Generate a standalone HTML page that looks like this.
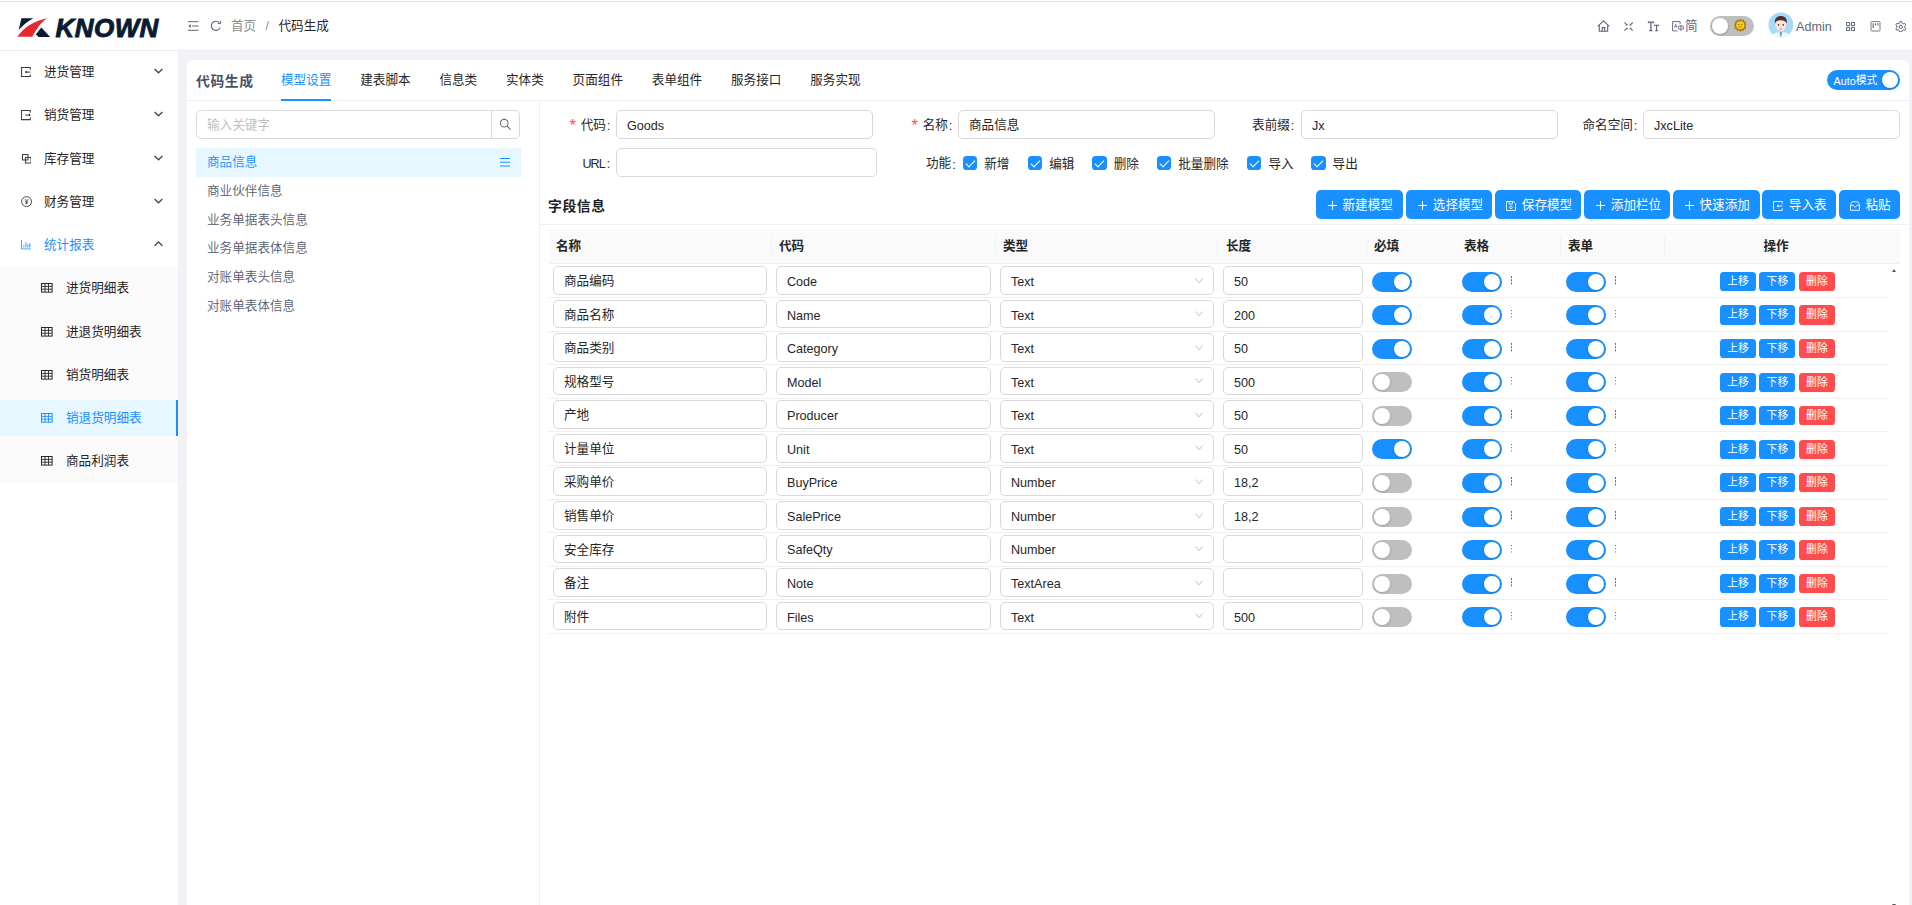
<!DOCTYPE html>
<html lang="zh-CN">
<head>
<meta charset="utf-8">
<title>代码生成</title>
<style>
*{box-sizing:border-box;margin:0;padding:0}
html,body{width:1912px;height:905px;overflow:hidden}
body{position:relative;background:#f0f2f5;font-family:"Liberation Sans","Noto Sans CJK SC",sans-serif;font-size:12.6px;color:#262626;line-height:1}
.abs{position:absolute}
.en{position:relative;top:1.6px}
svg{display:block}
/* header */
#hd{position:absolute;left:0;top:0;width:1912px;height:50px;background:#fff}
#hdline{position:absolute;left:0;top:50px;width:1912px;height:1px;background:#ecedef}
#topline{position:absolute;left:0;top:1px;width:1912px;height:1px;background:#dfdfdf}
#logo-txt{position:absolute;left:55.5px;top:13px;font-size:26px;font-weight:bold;font-style:italic;color:#0b1b33;letter-spacing:.45px;line-height:30px;-webkit-text-stroke:.9px #0b1b33}
.crumb{position:absolute;top:17px;line-height:18px;font-size:12.6px}
/* sidebar */
#sb{position:absolute;left:0;top:50px;width:178px;height:855px;background:#fff}
.mi{position:absolute;left:0;width:178px;height:36px;line-height:36px}
.mi .t{position:absolute;left:44px;top:0;font-size:12.6px;color:#262626}
.mi svg{position:absolute}
#sub{position:absolute;left:0;top:216.5px;width:178px;height:216px;background:#fafafa}
.si .t{left:66px}
.sel{background:#e6f7ff}
.sel:after{content:"";position:absolute;right:0;top:0;width:1.600px;height:36px;background:#1890ff}
.sel .t{color:#1890ff}
/* card */
#card{position:absolute;left:187px;top:60px;width:1722px;height:860px;background:#fff;border-radius:5px 5px 0 0}
.tab{position:absolute;top:71px;line-height:18px;font-size:12.6px;color:#262626}

.tabt{position:absolute;left:9px;top:10.5px;font-size:13.8px;letter-spacing:.6px;font-weight:bold;line-height:22px;color:#4a5164}
.tab{position:absolute;top:11px;line-height:18px;font-size:12.6px;color:#262626;white-space:nowrap}
.tab.on{color:#1890ff}
#tabline{position:absolute;left:0;top:40px;width:1722px;height:1px;background:#f0f0f0}
#ink{position:absolute;left:94px;top:39px;width:50px;height:2px;background:#1890ff}
#auto{position:absolute;left:1640px;top:10px;width:73px;height:20px;border-radius:10px;background:#1890ff;color:#fff;font-size:10.8px;line-height:20.8px;padding-left:6.5px}
#auto i{position:absolute;right:2px;top:2px;width:16px;height:16px;border-radius:8px;background:#fff;box-shadow:0 1px 3px rgba(0,35,11,.2)}
#vline{position:absolute;left:352px;top:41px;width:1px;height:820px;background:#f0f0f0}
#srch{position:absolute;left:9px;top:50px;width:324px;height:29px;border:1px solid #d9d9d9;border-radius:5px;background:#fff}
#srch .ph{position:absolute;left:10px;top:5px;line-height:18px;color:#bfbfbf}
#srch .btn{position:absolute;right:0;top:0;width:28px;height:27px;border-left:1px solid #d9d9d9}
.li{position:absolute;left:9px;width:325px;height:28.8px;line-height:29.6px;padding-left:11px;color:#565d70;font-weight:350}
.li.on{background:#e6f7ff;color:#1890ff}
.lab{position:absolute;line-height:18px;white-space:nowrap;color:#262626}
.lab b{color:#ff4d4f;font-weight:normal;font-family:"Liberation Sans",sans-serif;font-size:16.500px;line-height:0;position:relative;top:2.600px;left:-1px;margin-right:3.800px}
.lab u{text-decoration:none;position:relative;top:1.6px;margin-left:1px;margin-right:-.5px}
.inp{position:absolute;height:28.8px;border:1px solid #d9d9d9;border-radius:5px;background:#fff;line-height:29.4px;padding-left:10px;color:#262626;white-space:nowrap}
.cb{position:absolute;top:96px;width:14.4px;height:14.4px;border-radius:3.6px;background:#1890ff}
.cb:after{content:"";position:absolute;left:5px;top:1.800px;width:4px;height:7.800px;border:solid #fff;border-width:0 1.400px 1.400px 0;transform:rotate(45deg)}
.cbl{position:absolute;top:94.5px;line-height:18px;white-space:nowrap}
#sect{position:absolute;left:361px;top:136.200px;font-size:13.8px;letter-spacing:.6px;font-weight:bold;line-height:22px;color:#1f1f1f}
.bt{position:absolute;top:130px;height:29px;border-radius:5px;background:#1890ff;color:#fff;line-height:31.6px;white-space:nowrap;box-shadow:0 2px 0 rgba(0,0,0,.045)}
.bt span{position:absolute;top:0}
.bt svg{position:absolute}
#sline{position:absolute;left:353px;top:164px;width:1369px;height:1px;background:#f0f0f0}
#th{position:absolute;left:362px;top:169px;width:1351px;height:35px;background:#fafafa;border-bottom:1px solid #f0f0f0}
#th b{position:absolute;margin-left:-1px;top:8px;line-height:18px;font-weight:bold;color:#262626}
#th i{position:absolute;margin-left:-1px;top:8px;width:1px;height:18px;background:#f0f0f0}
.row{position:absolute;left:361px;width:1340px;height:34px}
.row:after{content:"";position:absolute;left:0;top:33.56px;width:1340px;height:1px;background:#f0f0f0}
.row .inp{top:2.5px;height:28.7px;line-height:29.2px}
.inp .en{top:.9px}
.sw{position:absolute;top:8px;width:40px;height:20px;border-radius:10px;background:#1890ff}
.sw:after{content:"";position:absolute;right:2px;top:2px;width:16px;height:16px;border-radius:8px;background:#fff;box-shadow:0 1px 3px rgba(0,35,11,.2)}
.sw.off{background:#bfbfbf}
.sw.off:after{right:auto;left:2px}
.dots{position:absolute;top:12.5px;width:2px;height:9px}
.dots:before{content:"";position:absolute;left:0;top:0;width:1.6px;height:1.6px;background:#6a6a6a;box-shadow:0 3.2px 0 #6a6a6a,0 6.4px 0 #6a6a6a}
.sb{position:absolute;top:8.3px;width:36px;height:19.2px;border-radius:3.6px;background:#1890ff;color:#fff;font-size:10.8px;line-height:19.800px;text-align:center;box-shadow:0 1.500px 0 rgba(0,0,0,.04)}
.sb.r{background:#ff4d4f}
.arrow{position:absolute;width:0;height:0;border-left:2.6px solid transparent;border-right:2.6px solid transparent}
</style>
</head>
<body>
<div id="hd"></div>

<!-- logo -->
<svg class="abs" style="left:16px;top:16px" width="36" height="23" viewBox="16 16 36 23">
<path d="M21.4 18.2 L33.4 18.2 C27.5 21.2 22.8 25.4 18.7 30 Z" fill="#0b1b33"/>
<path d="M17.3 36.7 C24 27.5 33.5 21 47 18.2 C41 22.5 36.6 28.5 32.3 36.7 Z" fill="#e8282f"/>
<path d="M41.3 27.5 L50.2 37 L38.6 37 L35.8 34.6 Z" fill="#0b1b33"/>
</svg>
<div id="logo-txt">KNOWN</div>
<!-- fold / reload -->
<svg class="abs" style="left:188px;top:21px" width="11" height="10" viewBox="0 0 11 10" fill="none" stroke="#5d6577" stroke-width="1"><path d="M0 .7H10.5M4.2 5H10.5M0 9.3H10.5"/><path d="M2.8 3.1L.4 5l2.4 1.9z" fill="#5d6577" stroke="none"/></svg>
<svg class="abs" style="left:209.5px;top:19.5px" width="12" height="12" viewBox="0 0 12 12" fill="none" stroke="#5d6577" stroke-width="1.1"><path d="M10.2 7.6A4.6 4.6 0 1 1 9.3 2.6"/><path d="M10.6 .9V3.6H7.9" stroke-width="1"/></svg>
<div class="crumb" style="left:231px;color:#8c8c8c">首页</div>
<div class="crumb" style="left:265.5px;color:#8c8c8c">/</div>
<div class="crumb" style="left:278.5px;color:#262626">代码生成</div>
<!-- right icons -->
<svg class="abs" style="left:1597px;top:19.8px" width="13" height="12" viewBox="0 0 13 12" fill="none" stroke="#5d6577" stroke-width="1.1" stroke-linejoin="round"><path d="M.7 6.3L6.5 .8L12.3 6.3"/><path d="M2.3 5.2V11.2H10.7V5.2"/><path d="M5.2 11.2V7.6H7.8V11.2"/></svg>
<svg class="abs" style="left:1623.6px;top:21.7px" width="9.2" height="9.2" viewBox="0 0 10 10" fill="none" stroke="#5d6577" stroke-width="1.1"><path d="M.5 .5L3.3 3.3M9.5 .5L6.7 3.3M.5 9.5L3.3 6.7M9.5 9.5L6.7 6.7"/><path d="M3.8 1.6V3.8H1.6zM6.2 1.6V3.8H8.4zM3.8 8.4V6.2H1.6zM6.2 8.4V6.2H8.4z" fill="#5d6577" stroke="none"/></svg>
<svg class="abs" style="left:1647px;top:21px" width="13" height="11" viewBox="0 0 13 11" fill="none" stroke="#5d6577" stroke-width="1.2"><path d="M1 1.100H6.800M3.900 1.100V9.600M2.400 9.600H5.400" stroke-width="1.300"/><path d="M1.300 .6V2.400M6.500 .6V2.400" stroke-width=".8"/><path d="M7.100 4.300H12M9.550 4.300V9.600M8.300 9.600H10.800" stroke-width="1.100"/><path d="M7.400 3.900V5.400M11.700 3.900V5.400" stroke-width=".7"/></svg>
<svg class="abs" style="left:1672.4px;top:20.6px" width="12" height="11" viewBox="0 0 13 12" fill="none" stroke="#5d6577" stroke-width="1"><path d="M8.8 3.6V.6H.6V10.8H6.2"/><path d="M2.6 7.2L4 3.2L5.4 7.2M3 6H5" stroke-width=".8"/><path d="M7 5.6H12.4V8.8H7zM9.7 4.4V11" stroke-width=".9"/></svg>
<div class="abs" style="left:1685px;top:17px;line-height:18px;font-size:12.6px;color:#5d6577">简</div>
<!-- theme switch -->
<div class="abs" style="left:1710px;top:16px;width:44px;height:20px;border-radius:10px;background:#bfbfbf"></div>
<div class="abs" style="left:1712px;top:18px;width:16px;height:16px;border-radius:8px;background:#fff;box-shadow:0 1px 3px rgba(0,35,11,.25)"></div>
<svg class="abs" style="left:1733.6px;top:19.4px" width="12.6" height="12.6" viewBox="0 0 12.6 12.6"><polygon points="6.30,0.00 7.57,1.57 9.45,0.84 9.76,2.84 11.76,3.15 11.03,5.03 12.60,6.30 11.03,7.57 11.76,9.45 9.76,9.76 9.45,11.76 7.57,11.03 6.30,12.60 5.03,11.03 3.15,11.76 2.84,9.76 0.84,9.45 1.57,7.57 0.00,6.30 1.57,5.03 0.84,3.15 2.84,2.84 3.15,0.84 5.03,1.57" fill="#a87512" stroke="#a87512" stroke-width=".6" stroke-linejoin="round"/><circle cx="6.300" cy="6.300" r="4.100" fill="#f7cb1c"/><circle cx="4.900" cy="5.600" r=".6" fill="#6b4a08"/><circle cx="7.700" cy="5.600" r=".6" fill="#6b4a08"/><path d="M4.800 7.600Q6.300 8.800 7.800 7.600" stroke="#6b4a08" stroke-width=".6" fill="none"/></svg>
<!-- avatar -->
<svg class="abs" style="left:1767.500px;top:12.400px" width="25.800" height="25.800" viewBox="0 0 26 26"><defs><clipPath id="avc"><circle cx="13" cy="13" r="12.6"/></clipPath></defs><circle cx="13" cy="13" r="12.6" fill="#a5dbf8"/><g clip-path="url(#avc)"><path d="M3 26C4 21.5 8 20.5 13 20.5S22 21.5 23 26Z" fill="#f4f8fb"/><path d="M11.5 20.5L13 26L14.5 20.5Z" fill="#4aa3e6"/><ellipse cx="13" cy="12.6" rx="5.6" ry="6.6" fill="#fbe3d6"/><path d="M7 11.5C6.3 5.5 10 4 13 4S19.700 5.500 19 11.500C18 9 16 8.200 13 8.200S8 9 7 11.500Z" fill="#4a3030"/><circle cx="10.6" cy="13" r=".8" fill="#3a2a2a"/><circle cx="15.4" cy="13" r=".8" fill="#3a2a2a"/><path d="M12 17Q13 17.800 14 17" stroke="#e26a6a" stroke-width=".9" fill="none"/></g></svg>
<div class="abs" style="left:1796px;top:17px;line-height:18px;font-size:12.6px;color:#5d6577"><span class="en" style="top:.8px">Admin</span></div>
<svg class="abs" style="left:1846px;top:22px" width="9" height="9" viewBox="0 0 9 9" fill="none" stroke="#5d6577" stroke-width="1"><path d="M.5 .5H3.600V3.600H.5ZM5.400 .5H8.500V3.600H5.400ZM.5 5.400H3.600V8.500H.5ZM5.400 5.400H8.500V8.500H5.400Z"/></svg>
<svg class="abs" style="left:1870px;top:21px" width="11" height="11" viewBox="0 0 11 11" fill="none" stroke="#5d6577" stroke-width="1"><rect x="1" y=".6" width="9" height="9.400" rx=".8" stroke-opacity=".85"/><path d="M3.200 2.200V7M5.600 2.200V4.600M8 2.200V4.600" stroke-width="1.100"/></svg>
<svg class="abs" style="left:1895.400px;top:20.600px" width="11.600" height="11.600" viewBox="0 0 11.6 11.6" fill="none" stroke="#5d6577" stroke-width="1" stroke-linejoin="round"><polygon points="4.59,1.88 4.90,0.58 6.70,0.58 7.01,1.88 8.59,2.79 9.88,2.41 10.77,3.96 9.80,4.89 9.80,6.71 10.77,7.64 9.88,9.19 8.59,8.81 7.01,9.72 6.70,11.02 4.90,11.02 4.59,9.72 3.01,8.81 1.72,9.19 0.83,7.64 1.80,6.71 1.80,4.89 0.83,3.96 1.72,2.41 3.01,2.79"/><circle cx="5.800" cy="5.800" r="1.700"/></svg>
<div id="topline"></div>
<div id="sb">
<div class="mi" style="top:4.00px"><svg style="left:21px;top:13.200px" width="10.200" height="10.200" viewBox="0 0 11 11" fill="none" stroke="#3c3c3c" stroke-width="1.100"><path d="M10 3V.6H.6V10.400H10V8"/><path d="M4.600 5.500H10.200"/><path d="M6.200 3.900L4.300 5.500l1.900 1.600z" fill="#262626" stroke="none"/></svg><span class="t">进货管理</span><svg style="left:154px;top:14.2px" width="9" height="6" viewBox="0 0 9 6" fill="none" stroke="#4a4a4a" stroke-width="1.400"><path d="M.6 1L4.500 4.800L8.400 1"/></svg></div>
<div class="mi" style="top:47.25px"><svg style="left:21px;top:13.200px" width="10.200" height="10.200" viewBox="0 0 11 11" fill="none" stroke="#3c3c3c" stroke-width="1.100"><path d="M10 3V.6H.6V10.400H10V8"/><path d="M4.600 5.500H9.800"/><path d="M8.600 3.900L10.500 5.500l-1.900 1.600z" fill="#262626" stroke="none"/></svg><span class="t">销货管理</span><svg style="left:154px;top:14.2px" width="9" height="6" viewBox="0 0 9 6" fill="none" stroke="#4a4a4a" stroke-width="1.400"><path d="M.6 1L4.500 4.800L8.400 1"/></svg></div>
<div class="mi" style="top:90.50px"><svg style="left:21.600px;top:13.500px" width="9.600" height="9.600" viewBox="0 0 10.6 10.6" fill="none" stroke="#3c3c3c" stroke-width="1.100"><rect x=".6" y=".6" width="6" height="6"/><rect x="3.800" y="3.800" width="6.200" height="6.200"/></svg><span class="t">库存管理</span><svg style="left:154px;top:14.2px" width="9" height="6" viewBox="0 0 9 6" fill="none" stroke="#4a4a4a" stroke-width="1.400"><path d="M.6 1L4.500 4.800L8.400 1"/></svg></div>
<div class="mi" style="top:133.75px"><svg style="left:20.600px;top:12.700px" width="11.200" height="11.200" viewBox="0 0 12 12" fill="none" stroke="#3c3c3c" stroke-width="1"><circle cx="6" cy="6" r="5.300"/><path d="M4.200 3.200L6 5.800L7.800 3.200M6 5.800V9M4.400 6.200H7.600M4.400 7.600H7.600" stroke-width=".8"/></svg><span class="t">财务管理</span><svg style="left:154px;top:14.2px" width="9" height="6" viewBox="0 0 9 6" fill="none" stroke="#4a4a4a" stroke-width="1.400"><path d="M.6 1L4.500 4.800L8.400 1"/></svg></div>
<div class="mi" style="top:177.00px"><svg style="left:21px;top:13.400px" width="10.400" height="9.400" viewBox="0 0 11 10" fill="none" stroke="#1890ff" stroke-width="1" stroke-opacity=".85"><path d="M.5 0V9.500H10.500"/><path d="M3 8V5.500M5.200 8V2.500M7.300 8V4.500M9.400 8V3.500" stroke-width="1.100"/></svg><span class="t" style="color:#1890ff">统计报表</span><svg style="left:154px;top:14.2px" width="9" height="6" viewBox="0 0 9 6" fill="none" stroke="#4a4a4a" stroke-width="1.400"><path d="M.6 4.800L4.500 1L8.400 4.800"/></svg></div>
<div id="sub"></div>
<div class="mi si" style="top:220.25px"><svg style="left:41px;top:13px" width="12" height="10" viewBox="0 0 12 10" fill="none" stroke="#262626" stroke-width="1"><rect x=".5" y=".5" width="10.600" height="8.600"/><path d="M.5 3.400H11M.5 6.200H11M4 .5V9M7.500 .5V9" stroke-width=".9"/></svg><span class="t">进货明细表</span></div>
<div class="mi si" style="top:263.50px"><svg style="left:41px;top:13px" width="12" height="10" viewBox="0 0 12 10" fill="none" stroke="#262626" stroke-width="1"><rect x=".5" y=".5" width="10.600" height="8.600"/><path d="M.5 3.400H11M.5 6.200H11M4 .5V9M7.500 .5V9" stroke-width=".9"/></svg><span class="t">进退货明细表</span></div>
<div class="mi si" style="top:306.75px"><svg style="left:41px;top:13px" width="12" height="10" viewBox="0 0 12 10" fill="none" stroke="#262626" stroke-width="1"><rect x=".5" y=".5" width="10.600" height="8.600"/><path d="M.5 3.400H11M.5 6.200H11M4 .5V9M7.500 .5V9" stroke-width=".9"/></svg><span class="t">销货明细表</span></div>
<div class="mi si sel" style="top:350.00px"><svg style="left:41px;top:13px" width="12" height="10" viewBox="0 0 12 10" fill="none" stroke="#1890ff" stroke-width="1"><rect x=".5" y=".5" width="10.600" height="8.600"/><path d="M.5 3.400H11M.5 6.200H11M4 .5V9M7.500 .5V9" stroke-width=".9"/></svg><span class="t">销退货明细表</span></div>
<div class="mi si" style="top:393.25px"><svg style="left:41px;top:13px" width="12" height="10" viewBox="0 0 12 10" fill="none" stroke="#262626" stroke-width="1"><rect x=".5" y=".5" width="10.600" height="8.600"/><path d="M.5 3.400H11M.5 6.200H11M4 .5V9M7.500 .5V9" stroke-width=".9"/></svg><span class="t">商品利润表</span></div>
</div>
<div id="card">
<div class="tabt">代码生成</div>
<div class="tab on" style="left:94px">模型设置</div>
<div class="tab" style="left:173.2px">建表脚本</div>
<div class="tab" style="left:252.4px">信息类</div>
<div class="tab" style="left:319px">实体类</div>
<div class="tab" style="left:385.6px">页面组件</div>
<div class="tab" style="left:464.8px">表单组件</div>
<div class="tab" style="left:544px">服务接口</div>
<div class="tab" style="left:623.2px">服务实现</div>
<div id="tabline"></div><div id="ink"></div>
<div id="auto"><span class="en" style="top:.7px">Auto</span>模式<i></i></div>
<div id="vline"></div>
<div id="srch"><span class="ph">输入关键字</span><div class="btn"><svg style="position:absolute;left:6.6px;top:6.5px" width="13" height="13" viewBox="0 0 13 13" fill="none" stroke="#6e6e6e" stroke-width="1.100"><circle cx="5.200" cy="5.200" r="3.800"/><path d="M8 8L11.700 11.700"/></svg></div></div>
<div class="li on" style="top:88px">商品信息<svg style="position:absolute;left:304px;top:9px" width="10.400" height="10" viewBox="0 0 10.4 10" stroke="#1890ff" stroke-width="1.050"><path d="M0 1.500H10.400M0 5.300H10.400M0 9.100H10.400"/></svg></div>
<div class="li" style="top:116.8px">商业伙伴信息</div>
<div class="li" style="top:145.6px">业务单据表头信息</div>
<div class="li" style="top:174.4px">业务单据表体信息</div>
<div class="li" style="top:203.2px">对账单表头信息</div>
<div class="li" style="top:232px">对账单表体信息</div>
<div class="lab" style="right:1299.2px;top:55.5px"><b>*</b>代码<u>:</u></div>
<div class="inp" style="left:429px;top:50px;width:257.0px"><span class="en">Goods</span></div>
<div class="lab" style="right:957.2px;top:55.5px"><b>*</b>名称<u>:</u></div>
<div class="inp" style="left:771px;top:50px;width:257.0px">商品信息</div>
<div class="lab" style="right:615.2px;top:55.5px">表前缀<u>:</u></div>
<div class="inp" style="left:1114px;top:50px;width:257.0px"><span class="en">Jx</span></div>
<div class="lab" style="right:272.2px;top:55.5px">命名空间<u>:</u></div>
<div class="inp" style="left:1456px;top:50px;width:257.0px"><span class="en">JxcLite</span></div>
<div class="lab" style="right:1299.2px;top:94px"><span class="en" style="letter-spacing:-.9px;margin-right:.9px;top:.8px">URL</span><u style="top:.8px">:</u></div>
<div class="inp" style="left:429px;top:88px;width:261.0px"></div>
<div class="lab" style="right:953.8px;top:94px">功能<u>:</u></div>
<div class="cb" style="left:775.8px"></div><div class="cbl" style="left:797.2px">新增</div>
<div class="cb" style="left:840.8px"></div><div class="cbl" style="left:862.2px">编辑</div>
<div class="cb" style="left:905.3px"></div><div class="cbl" style="left:926.7px">删除</div>
<div class="cb" style="left:969.8px"></div><div class="cbl" style="left:991.2px">批量删除</div>
<div class="cb" style="left:1060px"></div><div class="cbl" style="left:1081.4px">导入</div>
<div class="cb" style="left:1124.2px"></div><div class="cbl" style="left:1145.6px">导出</div>
<div id="sect">字段信息</div>
<div class="bt" style="left:1129px;width:87.0px"><svg style="left:11.5px;top:11px" width="9" height="9" viewBox="0 0 10 10" stroke="#fff" stroke-width="1.200"><path d="M5 0V10M0 5H10"/></svg><span style="left:26.5px">新建模型</span></div>
<div class="bt" style="left:1219.3px;width:86.0px"><svg style="left:11.5px;top:11px" width="9" height="9" viewBox="0 0 10 10" stroke="#fff" stroke-width="1.200"><path d="M5 0V10M0 5H10"/></svg><span style="left:26.5px">选择模型</span></div>
<div class="bt" style="left:1308.3px;width:86.0px"><svg style="left:10.900px;top:10.500px" width="10" height="10" viewBox="0 0 10 10" fill="none" stroke="#fff" stroke-width="1" stroke-opacity=".85"><path d="M.5 .5H7.500L9.500 2.500V9.500H.5Z"/><path d="M3 .5V3H6.500V.5"/><circle cx="5" cy="6.300" r="1.300"/></svg><span style="left:26.5px">保存模型</span></div>
<div class="bt" style="left:1397.3px;width:86.0px"><svg style="left:11.5px;top:11px" width="9" height="9" viewBox="0 0 10 10" stroke="#fff" stroke-width="1.200"><path d="M5 0V10M0 5H10"/></svg><span style="left:26.5px">添加栏位</span></div>
<div class="bt" style="left:1486px;width:87.0px"><svg style="left:11.5px;top:11px" width="9" height="9" viewBox="0 0 10 10" stroke="#fff" stroke-width="1.200"><path d="M5 0V10M0 5H10"/></svg><span style="left:26.5px">快速添加</span></div>
<div class="bt" style="left:1575.3px;width:73.7px"><svg style="left:10.900px;top:10.500px" width="10" height="10" viewBox="0 0 10 10" fill="none" stroke="#fff" stroke-width="1" stroke-opacity=".85"><path d="M9.300 2.800V.5H.5V9.500H9.300V7.200"/><path d="M4 5H9.500"/><path d="M5.600 3.600L3.900 5l1.700 1.400z" fill="#fff" stroke="none"/></svg><span style="left:26.5px">导入表</span></div>
<div class="bt" style="left:1652px;width:61.0px"><svg style="left:10.900px;top:10.500px" width="10" height="10" viewBox="0 0 10 10" fill="none" stroke="#fff" stroke-width="1" stroke-opacity=".85"><path d="M.5 3.600L2 .8H8L9.500 3.600V9.300H.5Z"/><path d="M.5 4.200H3.300C3.300 6.400 6.700 6.400 6.700 4.200H9.500"/></svg><span style="left:26.5px">粘贴</span></div>
<div id="sline"></div>
<div id="th"><b style="left:8.0px">名称</b><b style="left:231.0px">代码</b><b style="left:455.0px">类型</b><b style="left:678.0px">长度</b><b style="left:826.0px">必填</b><b style="left:916.0px">表格</b><b style="left:1020.0px">表单</b><b style="left:1215.5px">操作</b><i style="left:223.0px"></i><i style="left:447.0px"></i><i style="left:669px"></i><i style="left:818.4px"></i><i style="left:1012.4px"></i><i style="left:1116.4px"></i></div>
<div class="row" style="top:203.60px"><div class="inp" style="left:5px;width:214px">商品编码</div><div class="inp" style="left:228px;width:215px"><span class="en">Code</span></div><div class="inp" style="left:452px;width:214px"><span class="en">Text</span><svg style="position:absolute;right:9.600px;top:10.500px" width="8" height="5.500" viewBox="0 0 8 5.500" fill="none" stroke="#bfbfbf" stroke-width="1"><path d="M.4 .5L4 4.800L7.600 .5"/></svg></div><div class="inp" style="left:675px;width:140px"><span class="en">50</span></div><div class="sw" style="left:824px"></div><div class="sw" style="left:914px"></div><div class="dots" style="left:962.5px"></div><div class="sw" style="left:1018px"></div><div class="dots" style="left:1066.5px"></div><div class="sb" style="left:1172px">上移</div><div class="sb" style="left:1211.4px">下移</div><div class="sb r" style="left:1250.900px">删除</div></div>
<div class="row" style="top:237.16px"><div class="inp" style="left:5px;width:214px">商品名称</div><div class="inp" style="left:228px;width:215px"><span class="en">Name</span></div><div class="inp" style="left:452px;width:214px"><span class="en">Text</span><svg style="position:absolute;right:9.600px;top:10.500px" width="8" height="5.500" viewBox="0 0 8 5.500" fill="none" stroke="#bfbfbf" stroke-width="1"><path d="M.4 .5L4 4.800L7.600 .5"/></svg></div><div class="inp" style="left:675px;width:140px"><span class="en">200</span></div><div class="sw" style="left:824px"></div><div class="sw" style="left:914px"></div><div class="dots" style="left:962.5px"></div><div class="sw" style="left:1018px"></div><div class="dots" style="left:1066.5px"></div><div class="sb" style="left:1172px">上移</div><div class="sb" style="left:1211.4px">下移</div><div class="sb r" style="left:1250.900px">删除</div></div>
<div class="row" style="top:270.72px"><div class="inp" style="left:5px;width:214px">商品类别</div><div class="inp" style="left:228px;width:215px"><span class="en">Category</span></div><div class="inp" style="left:452px;width:214px"><span class="en">Text</span><svg style="position:absolute;right:9.600px;top:10.500px" width="8" height="5.500" viewBox="0 0 8 5.500" fill="none" stroke="#bfbfbf" stroke-width="1"><path d="M.4 .5L4 4.800L7.600 .5"/></svg></div><div class="inp" style="left:675px;width:140px"><span class="en">50</span></div><div class="sw" style="left:824px"></div><div class="sw" style="left:914px"></div><div class="dots" style="left:962.5px"></div><div class="sw" style="left:1018px"></div><div class="dots" style="left:1066.5px"></div><div class="sb" style="left:1172px">上移</div><div class="sb" style="left:1211.4px">下移</div><div class="sb r" style="left:1250.900px">删除</div></div>
<div class="row" style="top:304.28px"><div class="inp" style="left:5px;width:214px">规格型号</div><div class="inp" style="left:228px;width:215px"><span class="en">Model</span></div><div class="inp" style="left:452px;width:214px"><span class="en">Text</span><svg style="position:absolute;right:9.600px;top:10.500px" width="8" height="5.500" viewBox="0 0 8 5.500" fill="none" stroke="#bfbfbf" stroke-width="1"><path d="M.4 .5L4 4.800L7.600 .5"/></svg></div><div class="inp" style="left:675px;width:140px"><span class="en">500</span></div><div class="sw off" style="left:824px"></div><div class="sw" style="left:914px"></div><div class="dots" style="left:962.5px"></div><div class="sw" style="left:1018px"></div><div class="dots" style="left:1066.5px"></div><div class="sb" style="left:1172px">上移</div><div class="sb" style="left:1211.4px">下移</div><div class="sb r" style="left:1250.900px">删除</div></div>
<div class="row" style="top:337.84px"><div class="inp" style="left:5px;width:214px">产地</div><div class="inp" style="left:228px;width:215px"><span class="en">Producer</span></div><div class="inp" style="left:452px;width:214px"><span class="en">Text</span><svg style="position:absolute;right:9.600px;top:10.500px" width="8" height="5.500" viewBox="0 0 8 5.500" fill="none" stroke="#bfbfbf" stroke-width="1"><path d="M.4 .5L4 4.800L7.600 .5"/></svg></div><div class="inp" style="left:675px;width:140px"><span class="en">50</span></div><div class="sw off" style="left:824px"></div><div class="sw" style="left:914px"></div><div class="dots" style="left:962.5px"></div><div class="sw" style="left:1018px"></div><div class="dots" style="left:1066.5px"></div><div class="sb" style="left:1172px">上移</div><div class="sb" style="left:1211.4px">下移</div><div class="sb r" style="left:1250.900px">删除</div></div>
<div class="row" style="top:371.40px"><div class="inp" style="left:5px;width:214px">计量单位</div><div class="inp" style="left:228px;width:215px"><span class="en">Unit</span></div><div class="inp" style="left:452px;width:214px"><span class="en">Text</span><svg style="position:absolute;right:9.600px;top:10.500px" width="8" height="5.500" viewBox="0 0 8 5.500" fill="none" stroke="#bfbfbf" stroke-width="1"><path d="M.4 .5L4 4.800L7.600 .5"/></svg></div><div class="inp" style="left:675px;width:140px"><span class="en">50</span></div><div class="sw" style="left:824px"></div><div class="sw" style="left:914px"></div><div class="dots" style="left:962.5px"></div><div class="sw" style="left:1018px"></div><div class="dots" style="left:1066.5px"></div><div class="sb" style="left:1172px">上移</div><div class="sb" style="left:1211.4px">下移</div><div class="sb r" style="left:1250.900px">删除</div></div>
<div class="row" style="top:404.96px"><div class="inp" style="left:5px;width:214px">采购单价</div><div class="inp" style="left:228px;width:215px"><span class="en">BuyPrice</span></div><div class="inp" style="left:452px;width:214px"><span class="en">Number</span><svg style="position:absolute;right:9.600px;top:10.500px" width="8" height="5.500" viewBox="0 0 8 5.500" fill="none" stroke="#bfbfbf" stroke-width="1"><path d="M.4 .5L4 4.800L7.600 .5"/></svg></div><div class="inp" style="left:675px;width:140px"><span class="en">18,2</span></div><div class="sw off" style="left:824px"></div><div class="sw" style="left:914px"></div><div class="dots" style="left:962.5px"></div><div class="sw" style="left:1018px"></div><div class="dots" style="left:1066.5px"></div><div class="sb" style="left:1172px">上移</div><div class="sb" style="left:1211.4px">下移</div><div class="sb r" style="left:1250.900px">删除</div></div>
<div class="row" style="top:438.52px"><div class="inp" style="left:5px;width:214px">销售单价</div><div class="inp" style="left:228px;width:215px"><span class="en">SalePrice</span></div><div class="inp" style="left:452px;width:214px"><span class="en">Number</span><svg style="position:absolute;right:9.600px;top:10.500px" width="8" height="5.500" viewBox="0 0 8 5.500" fill="none" stroke="#bfbfbf" stroke-width="1"><path d="M.4 .5L4 4.800L7.600 .5"/></svg></div><div class="inp" style="left:675px;width:140px"><span class="en">18,2</span></div><div class="sw off" style="left:824px"></div><div class="sw" style="left:914px"></div><div class="dots" style="left:962.5px"></div><div class="sw" style="left:1018px"></div><div class="dots" style="left:1066.5px"></div><div class="sb" style="left:1172px">上移</div><div class="sb" style="left:1211.4px">下移</div><div class="sb r" style="left:1250.900px">删除</div></div>
<div class="row" style="top:472.08px"><div class="inp" style="left:5px;width:214px">安全库存</div><div class="inp" style="left:228px;width:215px"><span class="en">SafeQty</span></div><div class="inp" style="left:452px;width:214px"><span class="en">Number</span><svg style="position:absolute;right:9.600px;top:10.500px" width="8" height="5.500" viewBox="0 0 8 5.500" fill="none" stroke="#bfbfbf" stroke-width="1"><path d="M.4 .5L4 4.800L7.600 .5"/></svg></div><div class="inp" style="left:675px;width:140px"></div><div class="sw off" style="left:824px"></div><div class="sw" style="left:914px"></div><div class="dots" style="left:962.5px"></div><div class="sw" style="left:1018px"></div><div class="dots" style="left:1066.5px"></div><div class="sb" style="left:1172px">上移</div><div class="sb" style="left:1211.4px">下移</div><div class="sb r" style="left:1250.900px">删除</div></div>
<div class="row" style="top:505.64px"><div class="inp" style="left:5px;width:214px">备注</div><div class="inp" style="left:228px;width:215px"><span class="en">Note</span></div><div class="inp" style="left:452px;width:214px"><span class="en">TextArea</span><svg style="position:absolute;right:9.600px;top:10.500px" width="8" height="5.500" viewBox="0 0 8 5.500" fill="none" stroke="#bfbfbf" stroke-width="1"><path d="M.4 .5L4 4.800L7.600 .5"/></svg></div><div class="inp" style="left:675px;width:140px"></div><div class="sw off" style="left:824px"></div><div class="sw" style="left:914px"></div><div class="dots" style="left:962.5px"></div><div class="sw" style="left:1018px"></div><div class="dots" style="left:1066.5px"></div><div class="sb" style="left:1172px">上移</div><div class="sb" style="left:1211.4px">下移</div><div class="sb r" style="left:1250.900px">删除</div></div>
<div class="row" style="top:539.20px"><div class="inp" style="left:5px;width:214px">附件</div><div class="inp" style="left:228px;width:215px"><span class="en">Files</span></div><div class="inp" style="left:452px;width:214px"><span class="en">Text</span><svg style="position:absolute;right:9.600px;top:10.500px" width="8" height="5.500" viewBox="0 0 8 5.500" fill="none" stroke="#bfbfbf" stroke-width="1"><path d="M.4 .5L4 4.800L7.600 .5"/></svg></div><div class="inp" style="left:675px;width:140px"><span class="en">500</span></div><div class="sw off" style="left:824px"></div><div class="sw" style="left:914px"></div><div class="dots" style="left:962.5px"></div><div class="sw" style="left:1018px"></div><div class="dots" style="left:1066.5px"></div><div class="sb" style="left:1172px">上移</div><div class="sb" style="left:1211.4px">下移</div><div class="sb r" style="left:1250.900px">删除</div></div>
<div class="arrow" style="left:1704.900px;top:208.900px;border-bottom:3.200px solid #585858"></div>
<div class="arrow" style="left:1704.900px;top:843.600px;border-top:3.200px solid #585858"></div>
</div>
<div id="hdline"></div>
</body>
</html>
